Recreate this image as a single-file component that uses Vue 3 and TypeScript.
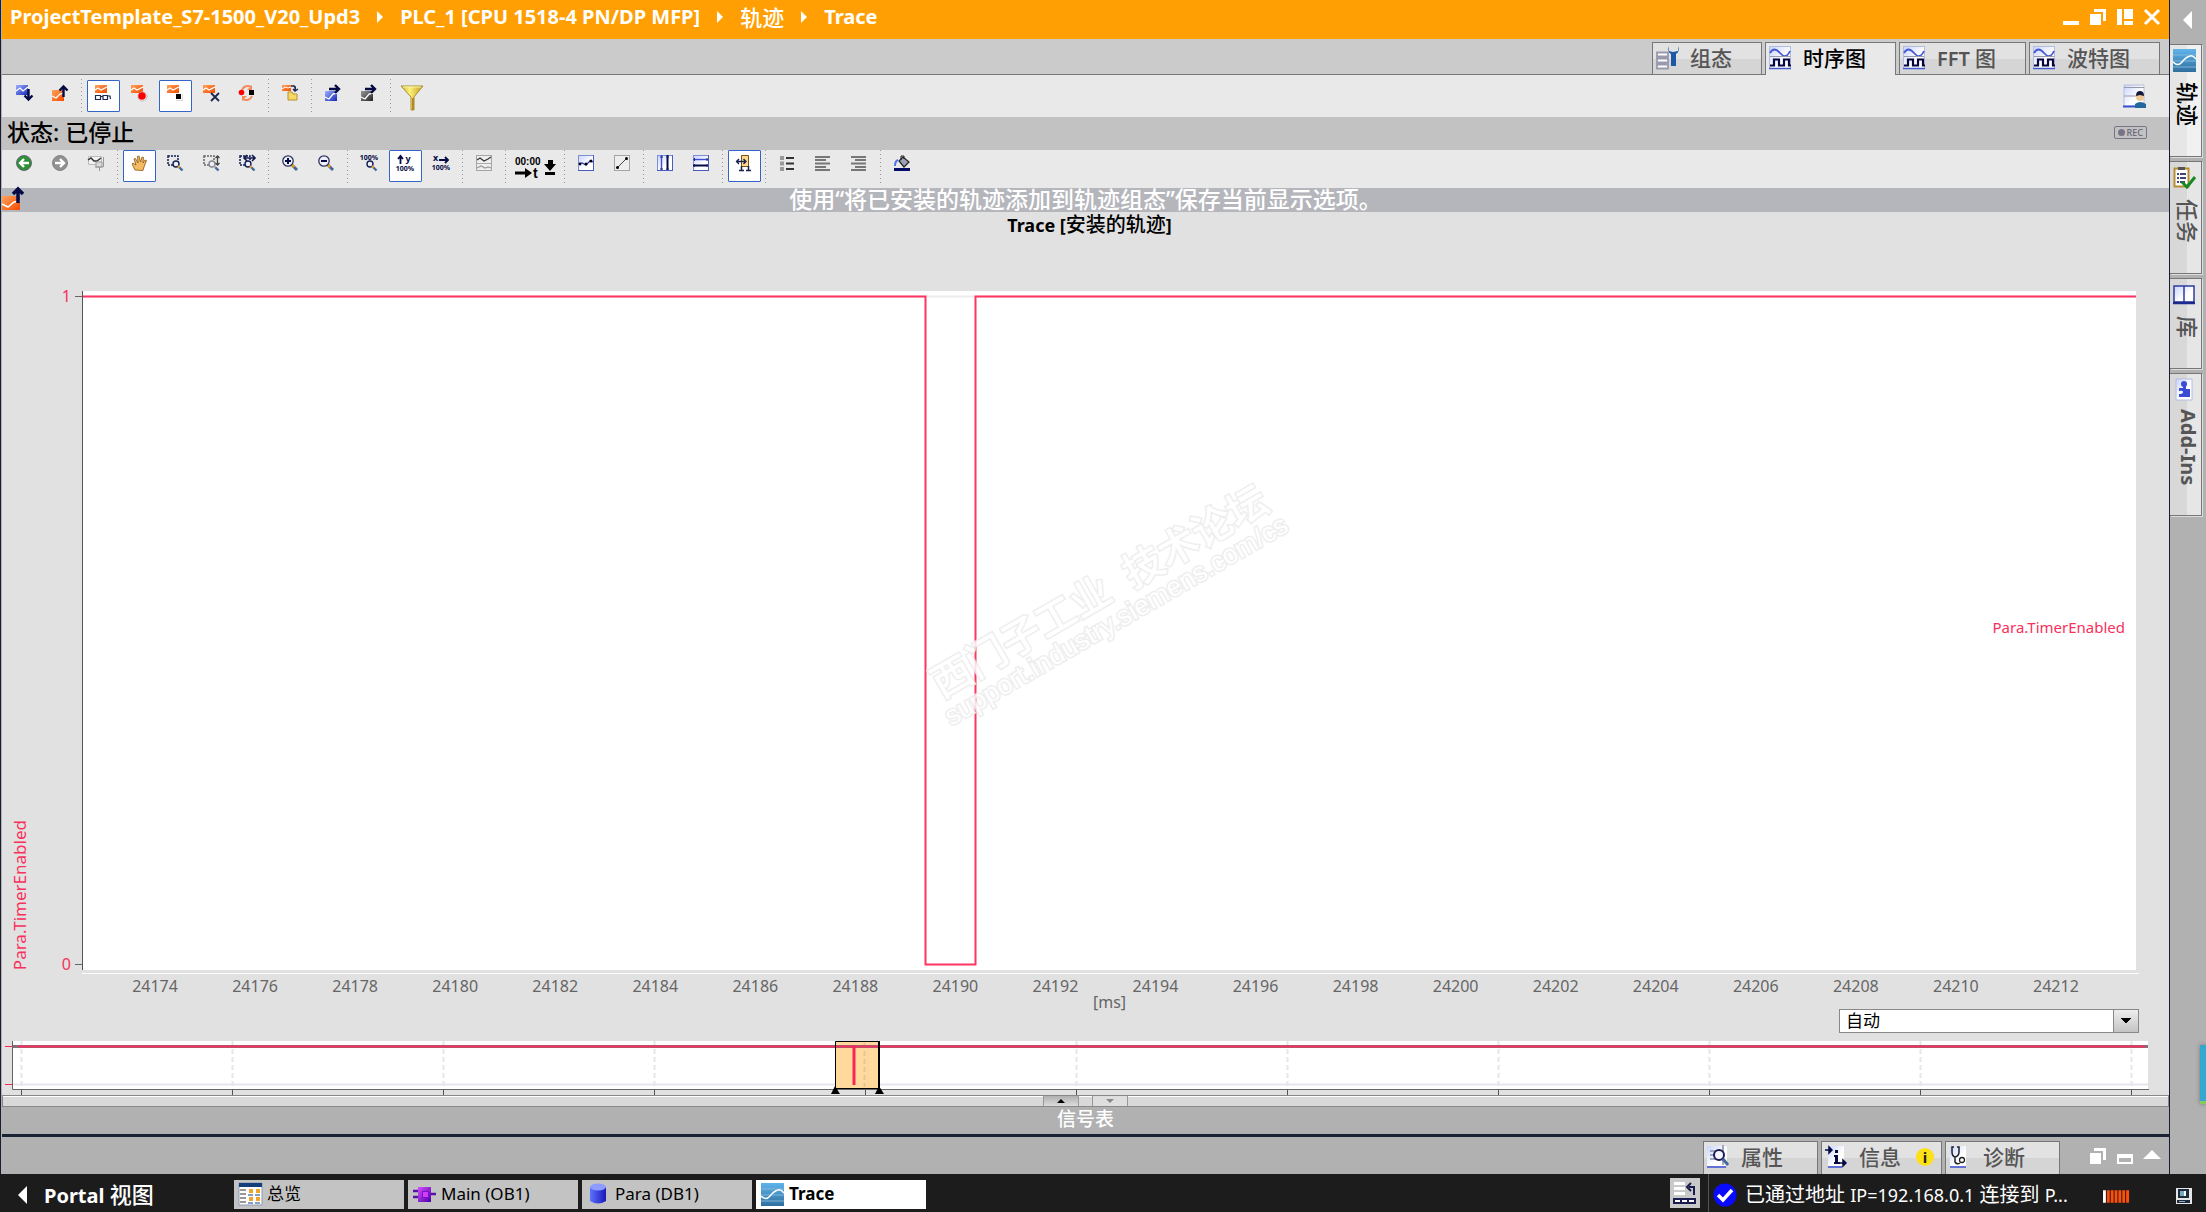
<script setup lang="ts">
import { ref } from 'vue'

interface Tool {
  icon: string
  label: string
  active?: boolean
  wide?: boolean
}

// 16x16 drawings shared by the toolbars
const orangeTrace = '<rect x="0" y="0" width="12" height="8" fill="url(#gOrange)"/><path d="M0 5l3-2 3 2 6-3" fill="none" stroke="#fff" stroke-width="1.3"/>'
const lens = (x: number, y: number, c = '#14204f', h = '#e8a020'): string =>
  `<g transform="translate(${x} ${y})"><circle cx="4" cy="4" r="3" fill="#eef" stroke="${c}" stroke-width="1.4"/><path d="M6 6l2 2" stroke="${h}" stroke-width="2"/><path d="M7.500 7.500l3 3" stroke="#446a9c" stroke-width="2.400"/></g>`
const dashBox = (c: string): string => `<path d="M1 1h10v9H1z" fill="none" stroke="${c}" stroke-width="1.500" stroke-dasharray="2 1"/>`
const bigLens = (sign: string): string =>
  `<path d="M10 10l5 5" stroke="#446a9c" stroke-width="3"/><path d="M10 10l2 2" stroke="#e8a020" stroke-width="3"/><circle cx="6" cy="6" r="5.200" fill="#eef0ff" stroke="#2b3358" stroke-width="1.300"/><path d="${sign}" stroke="#050a45" stroke-width="2"/>`
const blueTile = '<rect x=".5" y=".5" width="15" height="15" fill="url(#gTile)" stroke="#7e8fd4"/><path d="M0 15.500h16M15.500 0v16" stroke="#4a5cc0"/>'
const grayTile = '<rect x=".5" y=".5" width="15" height="15" fill="#eee" stroke="#a5a5a5"/>'

const icons: Record<string, string> = {
  download: '<rect width="12" height="10" fill="url(#gBlue)"/><path d="M0 6l4-3 3 3 5-4" fill="none" stroke="#fff" stroke-width="1.300"/><path d="M12.500 4v9M8.500 10.500l4 4 4-4" fill="none" stroke="#050a45" stroke-width="2.400"/>',
  upload: '<rect y="5" width="12" height="11" fill="url(#gOrange)"/><path d="M0 11l4 2 4-4 4-1" fill="none" stroke="#fff" stroke-width="1.300"/><path d="M11.500 12V2M7.500 5.500l4-4 4 4" fill="none" stroke="#050a45" stroke-width="2.400"/>',
  observe: orangeTrace + '<path d="M.500 10.500h5v4h-5zM8 10.500h4.500v4H8zM5.500 11.500H8M12.500 11l2.500 0 .500 3" fill="none" stroke="#1d2a55" stroke-width="1.200"/>',
  record: orangeTrace + '<circle cx="11.500" cy="11.500" r="4.500" fill="#fff" stroke="#bbb"/><circle cx="11" cy="11" r="3.800" fill="#f00"/>',
  stop: orangeTrace + '<path d="M9 9h7v7H9z" fill="#ddd"/><path d="M8 8h7v7H8z" fill="#fff"/><path d="M9 9h5v5H9z"/>',
  remove: orangeTrace + '<path d="M8 8l8 8M16 8l-8 8" stroke="#1d2550" stroke-width="1.800"/>',
  cycle: '<path d="M3 5a6 6 0 0 1 9-3M13 11a6 6 0 0 1-9 3" fill="none" stroke="#f58a5c" stroke-width="2"/><path d="M13 0v5H8zM3 16v-5h5z" fill="#f58a5c"/><circle cx="2.500" cy="7.500" r="2.800" fill="#f00"/><path d="M10 5h5v5h-5z"/>',
  folder: '<rect width="9" height="6" fill="url(#gOrange)"/><path d="M0 4l3-2 3 1 3-1" fill="none" stroke="#fff"/><path d="M9 1h3q2 1 1 4M11 4l2 2 3-2" fill="none" stroke="#1d2550" stroke-width="1.500"/><path d="M6 7h4l1 2h4v6H6z" fill="#f7d766" stroke="#b8902c"/>',
  exportBlue: '<rect y="6" width="12" height="10" fill="url(#gBlue)"/><path d="M0 12l4 2 4-5 4-1" fill="none" stroke="#fff" stroke-width="1.300"/><path d="M4 4h10M10 0l4 4-4 4" fill="none" stroke="#050a45" stroke-width="2.400"/>',
  exportGray: '<rect y="6" width="12" height="10" fill="url(#gDark)"/><path d="M0 12l4 2 4-5 4-1" fill="none" stroke="#fff" stroke-width="1.300"/><path d="M4 4h10M10 0l4 4-4 4" fill="none" stroke="#050a45" stroke-width="2.400"/>',
  funnel: '<path d="M-3 1h22l-9 11v13H7V12z" fill="url(#gGold)" stroke="#a8913a"/><path d="M-1 2h18" stroke="#fff6a8"/><path d="M8 13h2v12H8z" fill="#b5891c"/>',
  back: '<circle cx="8" cy="8" r="7.500" fill="#2f8f35" stroke="#667"/><path d="M13 8H4M8 4L4 8l4 4" fill="none" stroke="#fff" stroke-width="2.400"/>',
  forward: '<circle cx="8" cy="8" r="7.500" fill="#909090" stroke="#858585"/><path d="M3 8h9M8 4l4 4-4 4" fill="none" stroke="#fff" stroke-width="2.400"/>',
  pin: '<path d="M.500 1.500h13v8H.500z" fill="#f2f2f2" stroke="#bbb"/><path d="M0 5l3-2 3 3h3l4-3" fill="none" stroke="#333" stroke-width="1.400"/><path d="M8 7h6v5H8zM7 12h8M11.500 12v4M15.500 2v10" fill="#ddd" stroke="#999"/>',
  hand: '<path d="M4 15L1 9l1-1 3 2L3 4l1.500-.500L7 8 6.500 1.500 8 1l1.500 6L11 2l1.500.500L12 8l2-3 1.500.500L13 12l-1 3.500z" fill="#f3bc62" stroke="#8a5312" stroke-width=".8"/>',
  zoomBox: dashBox('#101c50') + lens(5, 5),
  zoomY: dashBox('#666') + lens(5, 5, '#888', '#aaa') + '<path d="M14.500 1v9M12.500 3l2-2 2 2M12.500 8l2 2 2-2" fill="none" stroke="#444" stroke-width="1.300"/>',
  zoomX: dashBox('#101c50') + lens(5, 5) + '<path d="M6 3h9M8 0L5 3l3 3M13 0l3 3-3 3" fill="none" stroke="#101c50" stroke-width="1.600"/>',
  zoomIn: bigLens('M3 6h6M6 3v6'),
  zoomOut: bigLens('M3 6h6'),
  zoomAll: '<text x="8" y="5" class="tiny">100%</text>' + lens(5, 5),
  scaleY: '<text x="8" y="16" class="tiny">100%</text><path d="M3.500 9V2M1 4l2.500-3L6 4" fill="none" stroke="#050a45" stroke-width="1.800"/><text x="11" y="7" class="tiny big">y</text>',
  scaleX: '<text x="8" y="15" class="tiny">100%</text><path d="M6 5h8M12 2l3 3-3 3" fill="none" stroke="#050a45" stroke-width="1.800"/><text x="2.500" y="6" class="tiny big">x</text>',
  waves: grayTile + '<path d="M1 5l3-2 4 3 4-2 3-2" fill="none" stroke="#333" stroke-width="1.200"/><path d="M1 8.500h14" stroke="#aaa"/><path d="M1 13l4-2 4 2 3-1 3 1" fill="none" stroke="#999" stroke-width="1.200"/>',
  time: '<text x="-3" y="10" class="clock">00:00</text><path d="M-3 18h11" stroke="#000" stroke-width="3"/><path d="M7 13v10l7-5z"/><text x="15" y="23" class="clock t">t</text><path d="M30 5h5v4h3l-6 7-6-7h4zM27 17h10v3H27z"/>',
  points: blueTile + '<path d="M1 9l3-1 4 2 4-4 3 1" fill="none" stroke="#2d3fb8" stroke-width="1.300"/><circle cx="2" cy="9" r="1.400"/><circle cx="8" cy="9" r="1.500"/><circle cx="13" cy="6" r="1.500"/>',
  line: grayTile + '<path d="M3 13L13 3" stroke="#444"/><circle cx="3.500" cy="12.500" r="1.500"/><circle cx="12.500" cy="3.500" r="1.500"/>',
  cursorsV: blueTile + '<path d="M4.500 0v15" stroke="#3c50d0" stroke-width="1.400"/><path d="M10.500 0v15" stroke="#050a45" stroke-width="2"/><path d="M3 2h3M3 14h3M9 2h3M9 14h3" stroke="#1d2c80"/>',
  cursorsH: blueTile + '<path d="M0 4.500h15" stroke="#3c50d0" stroke-width="1.400"/><path d="M0 10.500h15" stroke="#050a45" stroke-width="2"/><path d="M1.500 3v3M14 3v3M1.500 9v3M14 9v3" stroke="#1d2c80"/>',
  measure: '<path d="M5.500 .500h7v11h-7z" fill="#ffd98f" stroke="#7a5210"/><path d="M0 6.500h10M3 4L.500 6.500 3 9M7.500 4L10 6.500 7.500 9" fill="none" stroke="#14204f" stroke-width="1.300"/><path d="M5.500 11v4M12.500 11v4M3 15.500h5M10 15.500h5" stroke="#14204f" stroke-width="1.500"/>',
  legend: '<path d="M1 1h4v4H1zM1 6.500h4v4H1zM1 12h4v4H1z" fill="#999"/><path d="M7 3h8M7 8.500h8M7 14h8" stroke="#333" stroke-width="2"/>',
  alignLeft: '<path d="M0 2h15M0 5h11M0 8.500h15M0 12h11M0 15h15" stroke="#777" stroke-width="2"/>',
  alignRight: '<path d="M0 2h15M4 5h11M0 8.500h15M4 12h11M0 15h15" stroke="#777" stroke-width="2"/>',
  paint: '<path d="M5 6l4-4 6 5-5 5z" fill="#9da3b5" stroke="#222" stroke-width="1.200"/><path d="M7 5V1h3v3" fill="none" stroke="#222"/><path d="M4 5q-3 1-3 6" fill="none" stroke="#4a74ee" stroke-width="2"/><path d="M0 14.500h16" stroke="#050a66" stroke-width="3"/>',
}

const topTools: Tool[][] = [
  [{ icon: 'download', label: '下载轨迹' }, { icon: 'upload', label: '上传轨迹' }],
  [
    { icon: 'observe', label: '监视', active: true },
    { icon: 'record', label: '激活记录' },
    { icon: 'stop', label: '停止记录', active: true },
    { icon: 'remove', label: '删除轨迹' },
    { icon: 'cycle', label: '自动重复' },
  ],
  [{ icon: 'folder', label: '添加到测量' }],
  [{ icon: 'exportBlue', label: '导出组态' }, { icon: 'exportGray', label: '导出测量' }],
  [{ icon: 'funnel', label: '过滤器' }],
]

const chartTools: Tool[][] = [
  [{ icon: 'back', label: '撤消缩放' }, { icon: 'forward', label: '恢复缩放' }, { icon: 'pin', label: '固定视图' }],
  [
    { icon: 'hand', label: '移动视图', active: true },
    { icon: 'zoomBox', label: '缩放选择' },
    { icon: 'zoomY', label: '垂直缩放' },
    { icon: 'zoomX', label: '水平缩放' },
  ],
  [{ icon: 'zoomIn', label: '放大' }, { icon: 'zoomOut', label: '缩小' }],
  [
    { icon: 'zoomAll', label: '显示全部' },
    { icon: 'scaleY', label: '缩放 Y 轴', active: true },
    { icon: 'scaleX', label: '缩放 X 轴' },
  ],
  [{ icon: 'waves', label: '排列信号' }],
  [{ icon: 'time', label: '时间单位', wide: true }],
  [{ icon: 'points', label: '显示采样点' }, { icon: 'line', label: '插值' }],
  [{ icon: 'cursorsV', label: '垂直测量光标' }, { icon: 'cursorsH', label: '水平测量光标' }],
  [{ icon: 'measure', label: '测量值', active: true }],
  [{ icon: 'legend', label: '图例' }, { icon: 'alignLeft', label: '左对齐图例' }, { icon: 'alignRight', label: '右对齐图例' }],
  [{ icon: 'paint', label: '背景色' }],
]

const waveTab = '<rect x=".5" y=".5" width="21" height="22" fill="url(#gTile)" stroke="#b4bde0"/><path d="M1 7q4-7 10 0t10-2" fill="none" stroke="#4458d0" stroke-width="1.800"/><path d="M1 10.500h20" stroke="#99a"/><path d="M1 19.500h4v-6h5v6h5v-6h5v6h2" fill="none" stroke="#050540" stroke-width="2.200"/><path d="M0 22.500h22" stroke="#4458d0" stroke-width="1.500"/>'
const traceIcon = '<rect width="23" height="23" fill="url(#gSky)"/><path d="M0 6h23M0 12h23M0 18h23" stroke="#8fbfe0" stroke-width=".8"/><path d="M0 13q5 5 9 0t8-6q3-1 6 3" fill="none" stroke="#fff" stroke-width="1.500"/>'

const viewTabs = [
  { label: '组态', icon: '<path d="M1 6.500h11v4H1zM1 12.500h11v4H1zM1 18.500h11v4H1z" fill="#fff" stroke="#9a9aae" stroke-width="1.800"/><path d="M13 0q-2 6 2 8v12h5V8q4-2 2-8v5l-5 1-4-1z" fill="#1c57a8"/>' },
  { label: '时序图', icon: waveTab, active: true },
  { label: '图', lead: 'FFT', icon: waveTab },
  { label: '波特图', icon: waveTab },
]

const sideTabs = [
  { label: '轨迹', active: true, icon: traceIcon },
  { label: '任务', icon: '<path d="M1.500 2.500h14v18h-14z" fill="#fff" stroke="#b88d32" stroke-width="2"/><path d="M5 1h7v3H5z" fill="#555"/><path d="M4 8h2M4 12h2M4 16h2M7 8h6M7 12h6M7 16h5" stroke="#050a45" stroke-width="1.600"/><path d="M9 16l5 5 8-10" fill="none" stroke="#168a22" stroke-width="3"/>' },
  { label: '库', icon: '<path d="M1 3h10v16H1zM11 3h10v16H11z" fill="url(#gTile)" stroke="#2c3c9c" stroke-width="1.500"/><path d="M0 20h22" stroke="#1c2a90" stroke-width="2.500"/>' },
  { label: 'Add-Ins', lat: true, icon: '<path d="M3 1h16v21H3z" fill="url(#gTile)" stroke="#b4bde0"/><circle cx="11" cy="6" r="3" fill="#3b4bd6"/><path d="M10 8h3v3h4v8H6v-3q4 0 4-2t-4-1v-3h4z" fill="#3b4bd6"/>' },
]

const infoTabs = [
  { label: '属性', icon: '<path d="M0 1h20v20H0z" fill="url(#gTile)"/><path d="M16 0v20M3 6h8M3 10h5M3 14h6" stroke="#8a8fa8" stroke-width="1.500"/><path d="M0 22h19" stroke="#3a50d0" stroke-width="1.500"/><circle cx="12" cy="10" r="5" fill="#f4f4ff" stroke="#1a1f50" stroke-width="2"/><path d="M16 14l5 6" stroke="#446a9c" stroke-width="3"/>' },
  { label: '信息', badge: true, icon: '<path d="M3 1h16v20H3z" fill="url(#gTile)"/><path d="M3 22h14" stroke="#3a50d0" stroke-width="1.500"/><path d="M0 5h5M4 2l3 3-3 3zM14 18h5M18 15l3 3-3 3z" fill="#050a45" stroke="#050a45" stroke-width="1.500"/><path d="M10 5h3v3h-3zM9 10h4v7h2v2H9v-2h1v-5H9z" fill="#050a45"/>' },
  { label: '诊断', icon: '<path d="M1 1h16v20H1z" fill="url(#gTile)"/><path d="M1 22h16" stroke="#3a50d0" stroke-width="1.500"/><path d="M5 2H3v5q0 4 3 5 4-1 4-5V2H8M6 12v5q2 3 5 1" fill="none" stroke="#222" stroke-width="1.500"/><circle cx="13" cy="15" r="2.500" fill="#fff" stroke="#222" stroke-width="1.300"/>' },
]

const openEditors = [
  { label: '总览', icon: '<path d="M0 0h23v22H0z" fill="#fff" stroke="#8b99b5"/><path d="M0 0h23v4H0z" fill="#123f7a"/><path d="M1 7h6M1 11h6M1 15h6M1 19h6" stroke="#777" stroke-width="1.500"/><path d="M10 6h4v4h-4zM17 6h4v4h-4zM10 14h4v4h-4zM17 14h4v4h-4z" fill="#f2a32c"/><path d="M9 12h13M9 20h13" stroke="#123f7a" stroke-dasharray="5 2"/>' },
  { label: 'Main (OB1)', icon: '<path d="M0 8h6M0 14h6M17 11h6" stroke="#5a10a8" stroke-width="2.500"/><path d="M5 4h13v15H5z" fill="url(#gPurple)"/><path d="M9.500 8.500h6v6h-6z" fill="#d23cff" stroke="#7a10c0"/>' },
  { label: 'Para (DB1)', icon: '<path d="M3 4v14q8 5 16 0V4z" fill="url(#gCyl)"/><ellipse cx="11" cy="4" rx="8" ry="3.500" fill="#8f9cff"/>' },
  { label: 'Trace', active: true, icon: traceIcon },
]

const ticks = Array.from({ length: 20 }, (_, i) => 24174 + i * 2)
const overviewTicks = Array.from({ length: 11 }, (_, i) => 8 + i * 211)
const interval = ref('auto')
</script>

<template>
  <div class="app">
    <svg class="defs" aria-hidden="true">
      <defs>
        <linearGradient id="gOrange" x2="1" y2="1"><stop offset="0" stop-color="#ffa35c" /><stop offset="1" stop-color="#f64a00" /></linearGradient>
        <linearGradient id="gBlue" x2="1" y2="1"><stop offset="0" stop-color="#9db0ff" /><stop offset="1" stop-color="#1626b8" /></linearGradient>
        <linearGradient id="gDark" x2="1" y2="1"><stop offset="0" stop-color="#999" /><stop offset="1" stop-color="#222" /></linearGradient>
        <linearGradient id="gGold" x2="1"><stop offset="0" stop-color="#c9b138" /><stop offset=".4" stop-color="#fff27a" /><stop offset="1" stop-color="#c09a1c" /></linearGradient>
        <linearGradient id="gTile" x2="1" y2="1"><stop offset="0" stop-color="#c9d4ff" /><stop offset=".6" stop-color="#fff" /></linearGradient>
        <linearGradient id="gSky" y2="1" x2="0"><stop offset="0" stop-color="#5fb4ea" /><stop offset="1" stop-color="#2f6f9f" /></linearGradient>
        <linearGradient id="gPurple" x2="1" y2="1"><stop offset="0" stop-color="#d84cff" /><stop offset="1" stop-color="#4a00a8" /></linearGradient>
        <linearGradient id="gCyl" x2="1"><stop offset="0" stop-color="#5d72ff" /><stop offset="1" stop-color="#1a18b8" /></linearGradient>
      </defs>
    </svg>

    <div class="workspace">
      <main class="editor">
        <header class="titlebar">
          <nav class="crumbs">
            <a href="#">ProjectTemplate_S7-1500_V20_Upd3</a><i class="crumb-arrow"></i>
            <a href="#">PLC_1 [CPU 1518-4 PN/DP MFP]</a><i class="crumb-arrow"></i>
            <a href="#" class="cjk">轨迹</a><i class="crumb-arrow"></i>
            <a href="#">Trace</a>
          </nav>
          <div class="window-buttons">
            <button aria-label="最小化"><svg viewBox="0 0 16 16"><path d="M0 12h16v4H0z" /></svg></button>
            <button aria-label="还原"><svg viewBox="0 0 16 16"><path d="M0 5h11v11H0zM4 0h12v12h-3V3H4z" /></svg></button>
            <button aria-label="拆分"><svg viewBox="0 0 16 16"><path d="M0 0h5v16H0zM7 0h9v10H7zM7 12h9v4H7z" /></svg></button>
            <button aria-label="关闭"><svg viewBox="0 0 16 16"><path d="M1 1l14 14M15 1L1 15" stroke="#fff" stroke-width="3" /></svg></button>
          </div>
        </header>

        <div class="view-tabs">
          <button v-for="tab in viewTabs" :key="tab.label" class="tab" :class="{ active: tab.active }">
            <svg viewBox="0 0 23 24" v-html="tab.icon"></svg>
            <span><b v-if="tab.lead" class="lead">{{ tab.lead }}&nbsp;</b>{{ tab.label }}</span>
          </button>
        </div>

        <div class="toolbar">
          <template v-for="(group, g) in topTools" :key="g">
            <i v-if="g" class="separator"></i>
            <div v-for="tool in group" :key="tool.icon" class="cell">
              <button class="tool" :class="{ active: tool.active }" :aria-label="tool.label">
                <svg viewBox="0 0 16 16" v-html="icons[tool.icon]"></svg>
              </button>
            </div>
          </template>
          <button class="save-layout" aria-label="保存窗口设置">
            <svg viewBox="0 0 24 24"><path d="M1 1h20v21H1z" fill="url(#gTile)" stroke="#b9c0d8" /><path d="M1 3.500h20M1 12h20" stroke="#99a" /><path d="M0 22.500h18" stroke="#3a50d0" stroke-width="2" /><circle cx="17" cy="13" r="4" fill="#f0c896" /><path d="M13 12q0-5 4-5t4 5l-4-1z" fill="#14183a" /><path d="M12 24v-4q5-4 11 0v4z" fill="#23689c" /></svg>
          </button>
        </div>

        <div class="status"><span>状态: 已停止</span><span class="rec"><i></i>REC</span></div>

        <div class="toolbar chart-tools">
          <template v-for="(group, g) in chartTools" :key="g">
            <i v-if="g" class="separator"></i>
            <div v-for="tool in group" :key="tool.icon" class="cell" :class="{ wide: tool.wide }">
              <button class="tool" :class="{ active: tool.active }" :aria-label="tool.label">
                <svg viewBox="0 0 16 16" v-html="icons[tool.icon]"></svg>
              </button>
            </div>
          </template>
        </div>

        <div class="banner">
          <svg viewBox="0 0 24 24"><rect y="8" width="18" height="14" fill="url(#gOrange)" /><path d="M0 16l6 3 6-5 6-1" fill="none" stroke="#fff" stroke-width="1.500" /><path d="M16 15V3M11 6l5-5 5 5" fill="none" stroke="#050a45" stroke-width="3.500" /></svg>
          使用<span class="quote">“</span>将已安装的轨迹添加到轨迹组态<span class="quote">”</span>保存当前显示选项。
        </div>

        <section class="chart">
          <h1>Trace [<span>安装的轨迹</span>]</h1>
          <div class="plot-row">
            <div class="y-axis">
              <span class="y-name">Para.TimerEnabled</span>
              <div class="y-values"><span>1</span><span>0</span></div>
            </div>
            <div class="plot">
              <svg class="signal" viewBox="0 0 2053 679" preserveAspectRatio="none">
                <path d="M0 5.500H2053" class="grid" />
                <path d="M0 5.500H842.500V673.500H892.500V5.500H2053" class="curve" />
              </svg>
              <span class="signal-name">Para.TimerEnabled</span>
              <div class="watermark"><div class="mark-title">西门子工业&nbsp; 技术论坛</div><div class="mark-url">support.industry.siemens.com/cs</div></div>
            </div>
          </div>
          <div class="x-line"></div>
          <div class="x-axis"><span v-for="t in ticks" :key="t">{{ t }}</span></div>
          <div class="unit">[ms]</div>
          <div class="interval">
            <select v-model="interval" aria-label="时间间隔"><option value="auto">自动</option></select>
          </div>
          <div class="overview">
            <svg viewBox="0 0 2164 54" preserveAspectRatio="none">
              <path d="M8 0h2136v48H8z" fill="#fff" />
              <path d="M9 43.500H2144" stroke="#e6e6ec" stroke-width="2" />
              <g v-for="x in overviewTicks" :key="x">
                <path :d="`M${x + 9.5} 0V46`" stroke="#e6e6e9" stroke-width="2" stroke-dasharray="5 3" />
                <path :d="`M${x + 9.5} 49V54`" stroke="#555" />
              </g>
              <path d="M831 .500h44v47h-44z" fill="#ffda9c" />
              <path d="M860.500 2V46" stroke="#e4c596" stroke-width="2" stroke-dasharray="5 3" />
              <path d="M8.500 0V48.500H2145" fill="none" stroke="#666" />
              <path d="M9 5.500H2144" stroke="#857079" stroke-width="3" />
              <path d="M14 5.500H2141" stroke="#f6305c" stroke-width="2" />
              <path d="M850 5V44" stroke="#ff2456" stroke-width="3" />
              <path d="M1 5.500h7M1 43.500h7" stroke="#ff2456" />
              <path d="M831.500 48V.500H875V48" fill="none" stroke="#000" />
              <path d="M875 0V48" stroke="#000" stroke-width="2" />
              <path d="M831 47.500h44" stroke="#000" stroke-width="1" />
              <path d="M827 53l4-8 5 8zM871 53l4-8 5 8z" />
            </svg>
          </div>
        </section>

        <div class="splitter">
          <button class="up" aria-label="向上展开"><svg viewBox="0 0 8 4"><path d="M0 4l4-4 4 4z" /></svg></button>
          <button aria-label="向下收起"><svg viewBox="0 0 8 4"><path d="M0 0h8L4 4z" fill="#888" /></svg></button>
        </div>
        <div class="signal-table">信号表</div>

        <div class="inspector">
          <button v-for="tab in infoTabs" :key="tab.label" class="tab">
            <svg viewBox="0 0 23 24" v-html="tab.icon"></svg>
            <span>{{ tab.label }}</span>
            <i v-if="tab.badge" class="badge">i</i>
          </button>
          <div class="window-buttons">
            <button aria-label="浮动"><svg viewBox="0 0 16 16"><path d="M0 5h11v11H0zM4 0h12v12h-3V3H4z" /></svg></button>
            <button aria-label="最小化"><svg viewBox="0 0 16 16"><path d="M0 6h16v10H0z" /><path d="M2 10h12v4H2z" fill="#b1b1b1" /></svg></button>
            <button aria-label="展开"><svg viewBox="0 0 16 16"><path d="M-1 11l9-9 9 9z" /></svg></button>
          </div>
        </div>
      </main>

      <aside class="sidebar">
        <button class="collapse" aria-label="折叠任务卡"><svg viewBox="0 0 9 18"><path d="M9 0v18L0 9z" fill="#fff" /></svg></button>
        <button v-for="tab in sideTabs" :key="tab.label" class="side-tab" :class="{ active: tab.active, lat: tab.lat }">
          <svg viewBox="0 0 23 24" v-html="tab.icon"></svg>
          <span>{{ tab.label }}</span>
        </button>
        <div class="dock-handle"></div>
      </aside>
    </div>

    <footer class="taskbar">
      <button class="portal"><svg viewBox="0 0 9 18"><path d="M9 0v18L0 9z" fill="#fff" /></svg><span>Portal <b>视图</b></span></button>
      <div class="editors">
        <button v-for="item in openEditors" :key="item.label" :class="{ active: item.active }">
          <svg viewBox="0 0 23 23" v-html="item.icon"></svg>{{ item.label }}
        </button>
      </div>
      <button class="layout-button" aria-label="编辑器排列">
        <svg viewBox="0 0 30 30"><path d="M4 4h11v3H4zM4 9h11v3H4zM4 14h11v3H4z" fill="#fff" /><path d="M24 17V9h-5M21 5l-4 4 4 4" fill="none" stroke="#1a1c50" stroke-width="2" /><path d="M3 20h23v6H3z" fill="#1a1c50" /><path d="M5 22h5v2H5zM12 22h5v2h-5zM19 22h5v2h-5z" fill="#fff" /></svg>
      </button>
      <div class="connection">
        <svg viewBox="0 0 24 24"><circle cx="12" cy="12" r="11.500" fill="#0a0aff" /><path d="M5 12l5 5 9-10" fill="none" stroke="#fff" stroke-width="3.500" /></svg>
        <span>已通过地址 <small>IP=192.168.0.1</small> 连接到 <small>P...</small></span>
      </div>
      <svg class="progress" viewBox="0 0 28 13"><path d="M0 0h3v13H0z" fill="#fff" /><path d="M4 0h3v13H4zM8 0h3v13H8zM12 0h3v13h-3zM16 0h3v13h-3zM20 0h3v13h-3zM24 0h3v13h-3z" fill="#ff4d0a" /></svg>
      <svg class="station" viewBox="0 0 16 16"><path d="M0 0h16v16H0z" fill="#e6e6e6" /><path d="M2 1h11v9H2zM1 12h13v3H1z" fill="#1a2b40" /><path d="M4 3h4v5H4z" fill="#7ab" /><path d="M8 3h2v5H8z" fill="#fff" /><path d="M3 13h6v1H3z" fill="#9ab" /></svg>
    </footer>
  </div>
</template>

<style>
body {
  margin: 0;
}
.tiny {
  font: bold 7px "Noto Sans", sans-serif;
  text-anchor: middle;
  fill: #050a45;
}
.tiny.big {
  font-size: 9px;
}
.clock {
  font: bold 10px "Liberation Sans", sans-serif;
}
.clock.t {
  font-size: 14px;
}
</style>

<style scoped>
.app {
  display: flex;
  flex-direction: column;
  height: 100vh;
  overflow: hidden;
  background: #b1b1b1;
  font-family: "Noto Sans", "Noto Sans CJK SC", sans-serif;
  color: #000;
}
.defs {
  position: absolute;
  width: 0;
  height: 0;
}
button {
  margin: 0;
  padding: 0;
  border: 0;
  background: none;
  font-family: inherit;
  color: inherit;
}
svg {
  display: block;
  flex: none;
  overflow: visible;
}
.workspace {
  flex: 1;
  display: flex;
  min-height: 0;
}
.editor {
  flex: 1;
  min-width: 0;
  display: flex;
  flex-direction: column;
  border-left: 1px solid #1a1c30;
  border-right: 1px solid #1a1c30;
  padding-left: 1px;
}
.titlebar {
  display: flex;
  align-items: center;
  justify-content: space-between;
  height: 39px;
  background: #ff9f03;
  padding: 0 9px 0 8px;
}
.crumbs {
  display: flex;
  align-items: center;
  height: 34px;
  padding-bottom: 5px;
}
.crumbs a {
  color: #fff;
  text-decoration: none;
  font-size: 20px;
  line-height: 30px;
  font-weight: 700;
}
.crumbs .cjk {
  font-size: 22px;
  font-weight: 500;
}
.crumb-arrow {
  border-left: 6px solid #fff;
  border-top: 6px solid transparent;
  border-bottom: 6px solid transparent;
  margin: 0 17px;
}
.window-buttons {
  display: flex;
  gap: 11px;
  padding-bottom: 5px;
}
.window-buttons svg {
  width: 16px;
  height: 16px;
  fill: #fff;
}
.view-tabs {
  display: flex;
  justify-content: flex-end;
  align-items: flex-end;
  gap: 3px;
  height: 35px;
  padding-right: 9px;
  background: #cbcbcb;
  border-bottom: 1px solid #777;
}
.tab {
  display: flex;
  align-items: flex-start;
  gap: 11px;
  height: 32px;
  box-sizing: border-box;
  padding: 3px 29px 0 3px;
  border: 1px solid #777;
  border-bottom: 0;
  background: linear-gradient(#e2e2e2 50%, #d5d5d5 50%);
  color: #555;
  font-size: 21px;
  line-height: 24px;
  font-weight: 500;
  white-space: nowrap;
}
.tab span {
  height: 24px;
}
.tab svg {
  width: 23px;
  height: 24px;
}
.tab.active {
  height: 33px;
  margin-bottom: -1px;
  background: #e9e9e9;
  color: #000;
}
.lead {
  font-size: 20px;
  font-weight: 600;
}
.toolbar {
  display: flex;
  height: 42px;
  padding-left: 4px;
  background: #e9e9e9;
}
.chart-tools {
  height: 38px;
}
.cell {
  width: 36px;
  display: flex;
  justify-content: center;
  padding-top: 5px;
}
.chart-tools .cell {
  padding-top: 0;
}
.cell.wide {
  width: 52px;
}
.tool {
  width: 33px;
  height: 32px;
  box-sizing: border-box;
  border: 1px solid transparent;
  border-radius: 1px;
  padding: 4px 7px 10px;
}
.cell.wide .tool {
  width: 44px;
  padding-left: 4px;
}
.tool.active {
  background: #fff;
  border-color: #3564c8;
}
.tool svg {
  width: 16px;
  height: 16px;
}
.separator {
  width: 1px;
  height: 34px;
  margin: 4px 3px 0;
  background: repeating-linear-gradient(#999 0 1px, transparent 1px 4px);
}
.chart-tools .separator {
  margin-top: 0;
}
.save-layout {
  margin: 0 22px 0 auto;
}
.save-layout svg {
  width: 24px;
  height: 24px;
}
.status {
  display: flex;
  align-items: center;
  justify-content: space-between;
  height: 30px;
  padding: 0 22px 3px 5px;
  background: #c2c2c2;
  font-size: 23px;
  line-height: 30px;
  font-weight: 500;
}
.rec {
  display: flex;
  align-items: center;
  gap: 2px;
  border: 1px solid #777583;
  border-radius: 2px;
  padding: 0 3px;
  font-size: 9px;
  line-height: 11px;
  color: #666475;
}
.rec i {
  width: 7px;
  height: 7px;
  border-radius: 50%;
  background: #777583;
}
.banner {
  position: relative;
  height: 24px;
  background: #b5b6bc;
  color: #fff;
  font-size: 23px;
  line-height: 22px;
  font-weight: 500;
  text-align: center;
  white-space: nowrap;
}
.banner svg {
  position: absolute;
  left: 0;
  top: 0;
  width: 24px;
  height: 24px;
}
.quote {
  font-family: "Noto Sans", sans-serif;
}
.chart {
  flex: 1;
  display: flex;
  flex-direction: column;
  min-height: 0;
  background: #e1e1e1;
}
h1 {
  margin: 0;
  height: 79px;
  padding-left: 8px;
  text-align: center;
  font-size: 18px;
  line-height: 26px;
  font-weight: 700;
}
h1 span {
  font-size: 20px;
  font-weight: 500;
}
.plot-row {
  flex: 1;
  display: flex;
  min-height: 0;
  padding-right: 33px;
}
.y-axis {
  width: 80px;
  display: flex;
  justify-content: space-between;
  align-items: flex-end;
  color: #f8305c;
  font-size: 16px;
}
.y-name {
  writing-mode: vertical-rl;
  transform: rotate(180deg);
  font-size: 17px;
  line-height: 20px;
  margin-left: 8px;
}
.y-values {
  display: flex;
  flex-direction: column;
  justify-content: space-between;
  height: 100%;
  line-height: 20px;
}
.y-values span {
  display: flex;
  align-items: center;
  gap: 4px;
  margin: -5px 0 -4px;
}
.y-values span::after {
  content: "";
  width: 7px;
  height: 1px;
  background: #666;
}
.plot {
  position: relative;
  flex: 1;
  background: #fff;
  border-left: 1px solid #555;
}
.signal {
  position: absolute;
  inset: 0;
  width: 100%;
  height: 100%;
}
.signal path {
  fill: none;
  stroke-width: 2px;
  vector-effect: non-scaling-stroke;
}
.signal .grid {
  stroke: #ececec;
}
.signal .curve {
  stroke: #ff3460;
}
.signal-name {
  position: absolute;
  right: 11px;
  top: 48%;
  line-height: 20px;
  font-size: 15px;
  color: #f8305c;
}
.watermark {
  position: absolute;
  left: 50%;
  top: 46%;
  transform: translate(-51%, -50%) rotate(-30deg);
  white-space: nowrap;
  text-align: center;
  color: #fff;
  -webkit-text-stroke: 3px #ececec;
  paint-order: stroke fill;
  opacity: 0.85;
}
.mark-title {
  font-size: 40px;
  line-height: 40px;
  font-weight: 500;
}
.mark-url {
  font-family: "Liberation Sans", sans-serif;
  font-size: 27px;
  line-height: 28px;
}
.x-line {
  height: 1px;
  margin: 3px 30px 0 80px;
  background: #fff;
}
.x-axis {
  display: flex;
  padding: 2px 63px 0 103px;
  font-size: 16px;
  line-height: 20px;
  color: #666;
}
.x-axis span {
  flex: 1;
  text-align: center;
}
.unit {
  padding: 0 33px 1px 81px;
  text-align: center;
  font-size: 16px;
  line-height: 12px;
  color: #666;
}
.interval {
  position: relative;
  display: flex;
  justify-content: flex-end;
  padding: 0 30px 8px 0;
}
.interval select {
  width: 300px;
  height: 24px;
  box-sizing: border-box;
  appearance: none;
  border: 1px solid #888;
  border-radius: 0;
  padding: 0 6px;
  font-family: inherit;
  font-size: 17px;
  line-height: 22px;
  color: #000;
  background: #fff;
}
.interval::after {
  content: "";
  position: absolute;
  right: 31px;
  top: 1px;
  width: 24px;
  height: 22px;
  border-left: 1px solid #888;
  background:
    linear-gradient(to bottom left, #000 50%, transparent 50%) 7px 8px / 5px 6px no-repeat,
    linear-gradient(to bottom right, #000 50%, transparent 50%) 12px 8px / 5px 6px no-repeat,
    linear-gradient(#eee, #c4c4c4);
  pointer-events: none;
}
.overview {
  height: 54px;
}
.overview svg {
  width: calc(100% - 3px);
  margin-left: 2px;
  height: 54px;
}
.splitter {
  display: flex;
  justify-content: center;
  gap: 13px;
  height: 10px;
  border: 1px solid #888;
  background: #d9d9d9;
  box-shadow: inset 0 1px #fff;
}
.splitter button {
  width: 36px;
  height: 10px;
  box-sizing: border-box;
  border: solid #999;
  border-width: 0 1px;
  display: flex;
  justify-content: center;
  align-items: center;
  background: #dedede;
}
.splitter .up {
  background: linear-gradient(#b0b0b0, #dcdcdc);
}
.splitter svg {
  width: 8px;
  height: 4px;
}
.signal-table {
  height: 27px;
  color: #fff;
  text-align: center;
  font-size: 19px;
  line-height: 25px;
  font-weight: 500;
  background: #b1b1b1;
}
.inspector {
  display: flex;
  justify-content: flex-end;
  align-items: flex-end;
  gap: 3px;
  height: 37px;
  border-top: 3px solid #1a2233;
  padding-right: 9px;
}
.inspector .tab {
  height: 33px;
  padding-right: 34px;
}
.inspector .tab:nth-child(2) {
  padding-right: 7px;
}
.inspector .window-buttons {
  margin-left: 27px;
  padding-bottom: 10px;
}
.badge {
  width: 18px;
  height: 18px;
  border-radius: 50%;
  background: #fbe115;
  color: #222;
  font: 700 15px/18px "Noto Sans", sans-serif;
  text-align: center;
  margin: 3px 0 0 4px;
}
.sidebar {
  position: relative;
  width: 36px;
  display: flex;
  flex-direction: column;
  gap: 4px;
}
.collapse {
  height: 40px;
  padding-left: 13px;
}
.collapse svg {
  width: 9px;
  height: 18px;
}
.side-tab {
  display: flex;
  flex-direction: column;
  align-items: flex-start;
  gap: 9px;
  width: 32px;
  box-sizing: border-box;
  padding: 4px 3px 30px;
  border: 1px solid #777;
  border-left: 0;
  background: linear-gradient(90deg, #d8d8d8 55%, #e6e6e6 55%);
  color: #555;
  box-shadow: 1px 1px #ddd;
}
.side-tab.active {
  background: linear-gradient(90deg, #e6e6e6 55%, #f1f1f1 55%);
  color: #000;
}
.side-tab svg {
  width: 23px;
  height: 24px;
}
.side-tab span {
  writing-mode: vertical-rl;
  text-orientation: sideways;
  font-size: 22px;
  line-height: 24px;
  font-weight: 500;
  margin-left: 3px;
}
.side-tab.lat {
  gap: 7px;
}
.side-tab.lat span {
  font-size: 20px;
  font-weight: 700;
}
.dock-handle {
  position: absolute;
  right: 0;
  bottom: 70px;
  width: 6px;
  height: 56px;
  background: #35a8d0;
  border-bottom: 3px solid #8cc860;
  box-shadow: 0 0 4px #777;
}
.taskbar {
  display: flex;
  align-items: center;
  height: 38px;
  background: #1c1c1c;
  color: #fff;
}
.portal {
  display: flex;
  align-items: center;
  gap: 17px;
  width: 216px;
  margin-left: 18px;
  padding-top: 3px;
  font-size: 20px;
  line-height: 30px;
  font-weight: 700;
}
.portal b {
  font-size: 22px;
  font-weight: 500;
}
.portal svg {
  width: 9px;
  height: 18px;
}
.editors {
  flex: 1;
  display: flex;
  gap: 4px;
  padding-top: 2px;
}
.editors button {
  display: flex;
  align-items: center;
  gap: 5px;
  width: 170px;
  height: 29px;
  padding-left: 5px;
  background: #c3c3c3;
  color: #000;
  font-size: 17px;
  line-height: 26px;
}
.editors button.active {
  background: #fff;
  font-weight: 700;
}
.editors svg {
  width: 23px;
  height: 23px;
}
.layout-button {
  width: 30px;
  height: 30px;
  background: #c9c9c9;
  margin-right: 8px;
}
.connection {
  display: flex;
  align-items: center;
  gap: 8px;
  width: 390px;
  height: 38px;
  box-sizing: border-box;
  padding: 4px 0 0 4px;
  border-left: 1px solid #555;
  font-size: 20px;
  line-height: 30px;
  white-space: nowrap;
}
.connection small {
  font-size: 18px;
}
.connection svg {
  width: 24px;
  height: 24px;
}
.progress {
  width: 27px;
  height: 13px;
  margin: 6px 46px 0 5px;
}
.station {
  width: 16px;
  height: 16px;
  margin: 6px 14px 0 0;
}
</style>
